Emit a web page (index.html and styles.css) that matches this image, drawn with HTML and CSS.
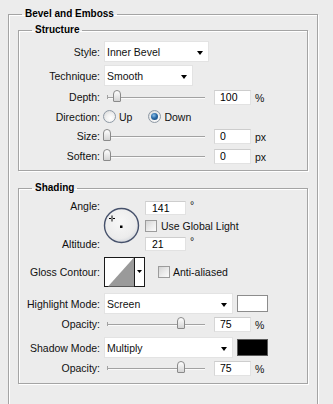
FILE: index.html
```html
<!DOCTYPE html>
<html>
<head>
<meta charset="utf-8">
<link rel="stylesheet" href="styles.css">
</head>
<body>
<div class="dialog">
  <fieldset class="group outer">
    <legend>Bevel and Emboss</legend>

    <fieldset class="group inner structure">
      <legend>Structure</legend>
      <div class="row sel">
        <span class="label">Style:</span>
        <div class="select w-style">Inner Bevel</div>
      </div>
      <div class="row sel">
        <span class="label">Technique:</span>
        <div class="select w-tech">Smooth</div>
      </div>
      <div class="row line depth">
        <span class="label">Depth:</span>
        <div class="slider" style="--v:0.1"><span class="thumb"></span></div>
        <span class="field">100</span>
        <span class="unit">%</span>
      </div>
      <div class="row line direction">
        <span class="label">Direction:</span>
        <span class="radio"></span><span class="rtext">Up</span>
        <span class="radio on gap"></span><span class="rtext">Down</span>
      </div>
      <div class="row line">
        <span class="label">Size:</span>
        <div class="slider" style="--v:0"><span class="thumb"></span></div>
        <span class="field">0</span>
        <span class="unit">px</span>
      </div>
      <div class="row line">
        <span class="label">Soften:</span>
        <div class="slider" style="--v:0"><span class="thumb"></span></div>
        <span class="field">0</span>
        <span class="unit">px</span>
      </div>
    </fieldset>

    <fieldset class="group inner shading">
      <legend>Shading</legend>
      <div class="row angle">
        <div class="label-stack">
          <span class="label a-top">Angle:</span>
          <span class="label">Altitude:</span>
        </div>
        <svg class="dial" width="37" height="37" viewBox="0 0 37 37">
          <defs>
            <radialGradient id="dialfill" cx="45%" cy="40%" r="60%">
              <stop offset="0" stop-color="#f7f7f7"/>
              <stop offset="0.8" stop-color="#ececec"/>
              <stop offset="1" stop-color="#d6d9de"/>
            </radialGradient>
          </defs>
          <circle cx="18.5" cy="18.5" r="17" fill="url(#dialfill)" stroke="#46516b" stroke-width="1.4"/>
          <path d="M6 11.5h6M9 8.5v6" stroke="#000" stroke-width="1"/>
          <rect x="8.5" y="11" width="1" height="1" fill="#fff"/>
          <rect x="17" y="18.5" width="2.5" height="2.5" fill="#000"/>
        </svg>
        <div class="angle-fields">
          <div class="fline"><span class="field wide">141</span><span class="deg">°</span></div>
          <div class="check-line"><span class="box"></span><span class="ctext">Use Global Light</span></div>
          <div class="fline"><span class="field wide">21</span><span class="deg">°</span></div>
        </div>
      </div>

      <div class="row gloss">
        <span class="label">Gloss Contour:</span>
        <svg class="contour" width="41" height="30" viewBox="0 0 41 30">
          <rect x="0.5" y="0.5" width="40" height="29" fill="#fff" stroke="#1a1a1a"/>
          <polygon points="4,29.5 30,0.5 30,29.5" fill="#9a9a9a"/>
          <path d="M30.5 0.5V29.5" stroke="#1a1a1a"/>
          <polygon points="33,13 38,13 35.5,16" fill="#000"/>
        </svg>
        <span class="box aa"></span><span class="ctext">Anti-aliased</span>
      </div>

      <div class="row sel hl">
        <span class="label">Highlight Mode:</span>
        <div class="select w-mode">Screen</div>
        <span class="swatch white"></span>
      </div>
      <div class="row line">
        <span class="label">Opacity:</span>
        <div class="slider" style="--v:0.75"><span class="thumb"></span></div>
        <span class="field">75</span>
        <span class="unit">%</span>
      </div>
      <div class="row sel sh">
        <span class="label">Shadow Mode:</span>
        <div class="select w-mode">Multiply</div>
        <span class="swatch black"></span>
      </div>
      <div class="row line">
        <span class="label">Opacity:</span>
        <div class="slider" style="--v:0.75"><span class="thumb"></span></div>
        <span class="field">75</span>
        <span class="unit">%</span>
      </div>
    </fieldset>
  </fieldset>
</div>
</body>
</html>
```

FILE: styles.css
```css
html, body {
  margin: 0;
  padding: 0;
  background: #ececec;
  overflow: hidden;
}

body {
  font-family: "Liberation Sans", Arial, sans-serif;
  font-size: 10.5px;
  color: #111;
  width: 333px;
  height: 404px;
}

.dialog {
  padding: 8px 0 0 8px;
}

.group {
  margin: 0;
  min-width: 0;
  border: 1px solid #a4a4a4;
  box-shadow: inset 1px 1px 0 #fff, 1px 1px 0 #fff;
}

.group > legend {
  font-weight: bold;
  font-size: 10px;
  line-height: 12px;
  padding: 0 3px;
  color: #000;
}

.outer {
  width: 310px;
  box-sizing: border-box;
  padding: 0 9px 40px 9px;
}

.outer > legend {
  margin-left: 4px;
}

.inner {
  width: 290px;
  box-sizing: border-box;
  padding: 0;
}

.inner > legend {
  margin-left: 13px;
}

.structure {
  margin-top: 4px;
  padding-top: 5px;
  padding-bottom: 4px;
}

.shading {
  margin-top: 11px;
  padding-top: 7px;
  padding-bottom: 5px;
}

/* rows */
.row {
  display: flex;
  align-items: center;
}

.row.sel {
  height: 21px;
}

.row.sel + .row.sel {
  margin-top: 3px;
}

.row.line {
  height: 20px;
}

.row.depth {
  margin-top: 1px;
}

.row.direction {
  height: 19px;
}

.label {
  flex: none;
  width: 81px;
  margin-right: 4px;
  text-align: right;
  white-space: nowrap;
}

/* dropdown */
.select {
  position: relative;
  box-sizing: border-box;
  height: 21px;
  background: #fff;
  border: 1px solid #e3e3e3;
  padding-left: 2px;
  display: flex;
  align-items: center;
  white-space: nowrap;
}

.select::after {
  content: "";
  position: absolute;
  right: 5px;
  top: 50%;
  margin-top: -1px;
  border-left: 3.5px solid transparent;
  border-right: 3.5px solid transparent;
  border-top: 4px solid #000;
}

.w-style { width: 105px; }
.w-tech { width: 89px; }
.w-mode { width: 129px; }

/* slider */
.slider {
  position: relative;
  flex: none;
  width: 106px;
  height: 20px;
}

.slider::before {
  content: "";
  position: absolute;
  left: 3px;
  width: 98px;
  top: 10px;
  height: 1px;
  background: #a2a2a2;
  box-shadow: 0 1px 0 #fbfbfb;
}

.slider::after {
  content: "";
  position: absolute;
  left: 3px;
  top: 8px;
  width: 1px;
  height: 4px;
  background: #a2a2a2;
}

.thumb {
  position: absolute;
  z-index: 1;
  top: 3px;
  left: calc(3px + var(--v) * 98px - 4px);
  width: 6px;
  height: 10px;
  border: 1px solid #8a8a8a;
  border-radius: 4px 4px 1px 1px;
  background: linear-gradient(#ffffff, #d4d4d4);
}

/* numeric field */
.field {
  flex: none;
  box-sizing: border-box;
  width: 37px;
  height: 15px;
  margin-left: 4px;
  padding-left: 5px;
  background: #fff;
  border: 1px solid #e2e2e2;
  border-top-color: #cdcdcd;
  border-left-color: #d6d6d6;
  line-height: 13px;
  color: #000;
}

.field.wide {
  width: 41px;
  margin-left: 0;
  padding-left: 6px;
}

.unit {
  margin-left: 4px;
  align-self: flex-start;
  margin-top: 5px;
}

/* radios */
.radio {
  flex: none;
  position: relative;
  box-sizing: border-box;
  width: 13px;
  height: 13px;
  margin-left: -1px;
  border-radius: 50%;
  border: 1px solid #8e99a5;
  background: radial-gradient(circle at 60% 65%, #ffffff 0%, #f0f0f0 45%, #d2d2d2 100%);
}

.radio.gap {
  margin-left: 16px;
}

.radio.on::after {
  content: "";
  position: absolute;
  left: 2px;
  top: 2px;
  width: 7px;
  height: 7px;
  border-radius: 50%;
  background: radial-gradient(circle at 40% 35%, #8cc0ea 0%, #2a6aa6 45%, #0f3f73 100%);
}

.rtext {
  margin-left: 3px;
}

/* angle block */
.row.angle {
  height: 50px;
  align-items: flex-start;
}

.label-stack {
  flex: none;
  width: 81px;
  margin-right: 4px;
  height: 50px;
  display: flex;
  flex-direction: column;
  justify-content: space-between;
}

.label-stack .label {
  margin-right: 0;
  line-height: 14px;
}

.label-stack .a-top {
  margin-top: -2px;
}

.dial {
  flex: none;
  display: block;
  margin-top: 6px;
  margin-left: -1px;
}

.angle-fields {
  margin-left: 5px;
  height: 50px;
  display: flex;
  flex-direction: column;
  justify-content: space-between;
}

.fline {
  display: flex;
  align-items: flex-start;
  height: 14px;
}

.fline .field {
  height: 14px;
  line-height: 12px;
}

.deg {
  margin-left: 4px;
  line-height: 10px;
  margin-top: -1px;
}

.check-line {
  display: flex;
  align-items: center;
  height: 14px;
}

.box {
  flex: none;
  box-sizing: border-box;
  width: 12px;
  height: 12px;
  border: 1px solid #9c9c9c;
  background: linear-gradient(135deg, #d4d4d4 0%, #ececec 55%, #fbfbfb 100%);
}

.ctext {
  margin-left: 4px;
  white-space: nowrap;
}

/* gloss contour */
.row.gloss {
  height: 30px;
  margin-top: 6px;
}

.contour {
  flex: none;
  display: block;
}

.box.aa {
  margin-left: 13px;
}

.row.gloss .ctext {
  margin-left: 3px;
}

.row.hl {
  margin-top: 6px;
}

.row.sh {
  margin-top: 3px;
}

.swatch {
  flex: none;
  box-sizing: border-box;
  width: 31px;
  height: 17px;
  margin-left: 4px;
  border: 1px solid #8c8c8c;
}

.swatch.white {
  background: #fff;
}

.swatch.black {
  background: #000;
  border-color: #5a5a5a;
}
```
